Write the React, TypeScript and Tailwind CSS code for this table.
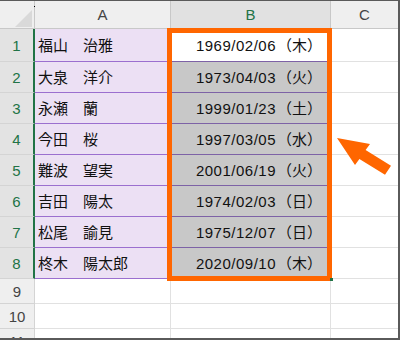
const ROWS = [
  { name: '福山　治雅', date: '1969/02/06', day: '（木）' },
  { name: '大泉　洋介', date: '1973/04/03', day: '（火）' },
  { name: '永瀬　蘭', date: '1999/01/23', day: '（土）' },
  { name: '今田　桜', date: '1997/03/05', day: '（水）' },
  { name: '難波　望実', date: '2001/06/19', day: '（火）' },
  { name: '吉田　陽太', date: '1974/02/03', day: '（日）' },
  { name: '松尾　諭見', date: '1975/12/07', day: '（日）' },
  { name: '柊木　陽太郎', date: '2020/09/10', day: '（木）' },
];

const EMPTY = ['9', '10', '11'];

function HeaderRow() {
  return (
    <div className="flex h-[28px] border-b border-[#c8c8c8] bg-[#efefef] shrink-0">
      <div className="relative w-[35px] border-r border-[#c8c8c8]">
        <div className="absolute left-[15px] top-[9px] w-0 h-0 border-l-[17px] border-l-transparent border-b-[17px] border-b-[#d9d9d9]" />
        <div className="absolute left-[34px] top-[5px] w-px h-px bg-black" />
      </div>
      <div className="w-[136px] border-r border-[#c8c8c8] flex items-center justify-center text-[15px] text-[#444]">A</div>
      <div className="w-[160px] border-r border-[#c8c8c8] bg-[#e1e1e1] flex items-center justify-center text-[15px] text-[#217346]">B</div>
      <div className="flex-1 flex items-center justify-center text-[15px] text-[#444]">C</div>
    </div>
  );
}

function DataRow({ idx, name, date, day }: { idx: number; name: string; date: string; day: string }) {
  const h = idx === 0 ? 'h-[33px]' : 'h-[31px]';
  const active = idx === 0;
  return (
    <div className={`flex ${h} shrink-0`}>
      <div className="w-[35px] border-r-2 border-r-[#217346] border-b border-b-[#d4d4d4] bg-[#e3e3e3] flex items-center justify-center text-[15px] text-[#217346]">
        {idx + 1}
      </div>
      <div className="w-[136px] border-r border-r-[#9b6fcf] border-b border-b-[#9b6fcf] bg-[#ece0f4] flex items-center pl-[3px] text-[15px] text-[#111]">
        {name}
      </div>
      <div
        className={`w-[160px] border-r border-r-[#d4d4d4] border-b border-b-[#7d62a6] flex items-center justify-end pr-[8px] text-[15px] text-[#111] ${
          active ? 'bg-white' : 'bg-[#c8c8c8]'
        }`}
      >
        <span className="tracking-[0.5px] mr-[1px]">{date}</span>
        <span>{day}</span>
      </div>
      <div className="flex-1 border-b border-b-[#e1e1e1] bg-white" />
    </div>
  );
}

function EmptyRow({ label }: { label: string }) {
  return (
    <div className="flex h-[25px] shrink-0">
      <div className="w-[35px] border-r border-r-[#d4d4d4] border-b border-b-[#d4d4d4] bg-[#efefef] flex items-center justify-center text-[15px] text-[#444]">
        {label}
      </div>
      <div className="w-[136px] border-r border-r-[#e1e1e1] border-b border-b-[#e1e1e1]" />
      <div className="w-[160px] border-r border-r-[#e1e1e1] border-b border-b-[#e1e1e1]" />
      <div className="flex-1 border-b border-b-[#e1e1e1]" />
    </div>
  );
}

export default function App() {
  return (
    <div className="relative w-[400px] h-[340px] overflow-hidden bg-white border-t border-r-2 border-b-2 border-[#5a5a5a] flex flex-col leading-none font-['Liberation_Sans','Noto_Sans_CJK_JP',sans-serif]">
      <HeaderRow />
      {ROWS.map((r, i) => (
        <DataRow key={i} idx={i} name={r.name} date={r.date} day={r.day} />
      ))}
      {EMPTY.map((l) => (
        <EmptyRow key={l} label={l} />
      ))}

      {/* selection highlight */}
      <div className="absolute left-[167px] top-[27px] w-[165px] h-[253px] border-[5px] border-[#ff6600] pointer-events-none" />
      <div className="absolute left-[330px] top-[277px] w-[3px] h-[3px] bg-[#217346]" />

      <svg className="absolute left-0 top-[-1px] pointer-events-none" width="400" height="340" viewBox="0 0 400 340">
        <polygon
          points="337,138 370,144 365.6,150.1 391,165.8 385,174.8 359.4,158.9 355,165"
          fill="#ff6600"
        />
      </svg>
    </div>
  );
}
